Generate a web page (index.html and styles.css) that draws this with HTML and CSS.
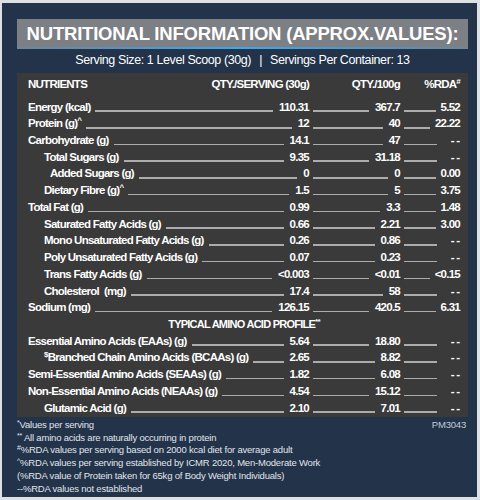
FILE: index.html
```html
<!DOCTYPE html>
<html lang="en">
<head>
    <meta charset="UTF-8">
    <meta name="viewport" content="width=device-width, initial-scale=1.0">
    <title>Nutritional Information</title>
    <link rel="stylesheet" href="styles.css">
</head>
<body>

    <div class="panel">
        <h1 class="title">NUTRITIONAL INFORMATION (APPROX.VALUES):</h1>
        <p class="serving">Serving Size: 1 Level Scoop (30g)<span class="sep">|</span>Servings Per Container: 13</p>

        <div class="facts">
            <div class="row head">
                <span>NUTRIENTS</span>
                <span class="num">QTY./SERVING (30g)</span>
                <span class="num">QTY./100g</span>
                <span class="num">%RDA<sup>#</sup></span>
            </div>

            <div class="row"><span class="name">Energy (kcal)</span><b>110.31</b><b>367.7</b><b>5.52</b></div>
            <div class="row"><span class="name">Protein (g)<sup>^</sup></span><b>12</b><b>40</b><b>22.22</b></div>
            <div class="row"><span class="name">Carbohydrate (g)</span><b>14.1</b><b>47</b><b class="na">--</b></div>
            <div class="row"><span class="name sub1">Total Sugars (g)</span><b>9.35</b><b>31.18</b><b class="na">--</b></div>
            <div class="row"><span class="name sub2">Added Sugars (g)</span><b>0</b><b>0</b><b>0.00</b></div>
            <div class="row"><span class="name sub1">Dietary Fibre (g)<sup>^</sup></span><b>1.5</b><b>5</b><b>3.75</b></div>
            <div class="row"><span class="name">Total Fat (g)</span><b>0.99</b><b>3.3</b><b>1.48</b></div>
            <div class="row"><span class="name sub1">Saturated Fatty Acids (g)</span><b>0.66</b><b>2.21</b><b>3.00</b></div>
            <div class="row"><span class="name sub1">Mono Unsaturated Fatty Acids (g)</span><b>0.26</b><b>0.86</b><b class="na">--</b></div>
            <div class="row"><span class="name sub1">Poly Unsaturated Fatty Acids (g)</span><b>0.07</b><b>0.23</b><b class="na">--</b></div>
            <div class="row"><span class="name sub1">Trans Fatty Acids (g)</span><b>&lt;0.003</b><b>&lt;0.01</b><b>&lt;0.15</b></div>
            <div class="row"><span class="name sub1">Cholesterol&nbsp; (mg)</span><b>17.4</b><b>58</b><b class="na">--</b></div>
            <div class="row"><span class="name">Sodium (mg)</span><b>126.15</b><b>420.5</b><b>6.31</b></div>

            <div class="row profile">TYPICAL AMINO ACID PROFILE<sup>**</sup></div>

            <div class="row"><span class="name">Essential Amino Acids (EAAs) (g)</span><b>5.64</b><b>18.80</b><b class="na">--</b></div>
            <div class="row"><span class="name sub1"><sup>$</sup>Branched Chain Amino Acids (BCAAs) (g)</span><b>2.65</b><b>8.82</b><b class="na">--</b></div>
            <div class="row"><span class="name">Semi-Essential Amino Acids (SEAAs) (g)</span><b>1.82</b><b>6.08</b><b class="na">--</b></div>
            <div class="row"><span class="name">Non-Essential Amino Acids (NEAAs) (g)</span><b>4.54</b><b>15.12</b><b class="na">--</b></div>
            <div class="row"><span class="name sub1">Glutamic Acid (g)</span><b>2.10</b><b>7.01</b><b class="na">--</b></div>
        </div>

        <div class="notes">
            <div>
                <p><sup>*</sup>Values per serving</p>
                <p><sup>**</sup> All amino acids are naturally occurring in protein</p>
                <p><sup>#</sup>%RDA values per serving based on 2000 kcal diet for average adult</p>
                <p><sup>^</sup>%RDA values per serving established by ICMR 2020, Men-Moderate Work</p>
                <p>(%RDA value of Protein taken for 65kg of Body Weight Individuals)</p>
                <p>--%RDA values not established</p>
            </div>
            <span class="code">PM3043</span>
        </div>
    </div>

</body>
</html>
```

FILE: styles.css
```css
body {
    margin: 0;
    background-color: #dde1e6;
    font-family: "Liberation Sans", Arial, sans-serif;
}
.panel {
    width: 475px;
    height: 494px;
    margin: 3px 0 0 2px;
    padding: 16px 9px 0 15px;
    box-sizing: border-box;
    background-color: #22334a;
    color: #f4f4f4;
}
/* Grey heading bar with the blue glow under it */
.title {
    margin: 0;
    height: 30px;
    box-sizing: border-box;
    background-color: #7c7f84;
    border-bottom: 2px solid #3aa0e6;
    border-image: linear-gradient(90deg, rgba(58, 160, 230, 0.2), #3aa8f0 50%, rgba(58, 160, 230, 0.2)) 1;
    font-size: 18.5px;
    font-weight: bold;
    line-height: 29px;
    letter-spacing: -0.2px;
    text-align: center;
    color: #ffffff;
}
.serving {
    margin: 0;
    height: 24px;
    line-height: 22px;
    font-size: 12.5px;
    letter-spacing: -0.4px;
    text-align: center;
    color: #ffffff;
}
.serving .sep {
    margin: 0 8px;
}
/* Table */
.facts {
    height: 344px;
    box-sizing: border-box;
    padding: 0 8px 0 11px;
    background-color: #3a3a3a;
}
.row {
    display: grid;
    grid-template-columns: auto 1fr 87px 56px;
    column-gap: 4px;
    height: 16.72px;
    line-height: 16.72px;
    font-size: 11.5px;
    font-weight: bold;
    letter-spacing: -0.75px;
    color: #ffffff;
}
.row.head {
    height: 22px;
    line-height: 22px;
    margin-bottom: 3.6px;
}
.row .num {
    text-align: right;
}
.row .name {
    padding-right: 1px;
}
.row .sub1 {
    padding-left: 16px;
}
.row .sub2 {
    padding-left: 22px;
}
.row b {
    display: flex;
    justify-content: space-between;
    align-items: flex-end;
    white-space: nowrap;
}
/* leader line before every value */
.row b::before {
    content: "";
    flex: 1;
    height: 1.5px;
    margin: 0 6px 3.5px 0;
    background-color: #acacac;
}
.row b:last-child::before {
    max-width: 33px;
    margin-right: 5px;
}
.row b.na {
    letter-spacing: 1.5px;
    margin-right: -1.5px;
}
.row.profile {
    display: block;
    text-align: center;
    font-size: 11px;
    letter-spacing: -0.75px;
}
sup {
    font-size: 8px;
    line-height: 0;
    vertical-align: 4px;
}
/* Footnotes */
.notes {
    display: flex;
    justify-content: space-between;
    padding: 2px 2px 0 0;
    font-size: 9.5px;
    line-height: 12.7px;
    letter-spacing: -0.2px;
    color: #e1e5ea;
}
.notes p {
    margin: 0;
}
.notes sup {
    font-size: 7px;
    vertical-align: 3px;
}
.code {
    font-size: 9.5px;
    color: #c6ccd4;
}
```
